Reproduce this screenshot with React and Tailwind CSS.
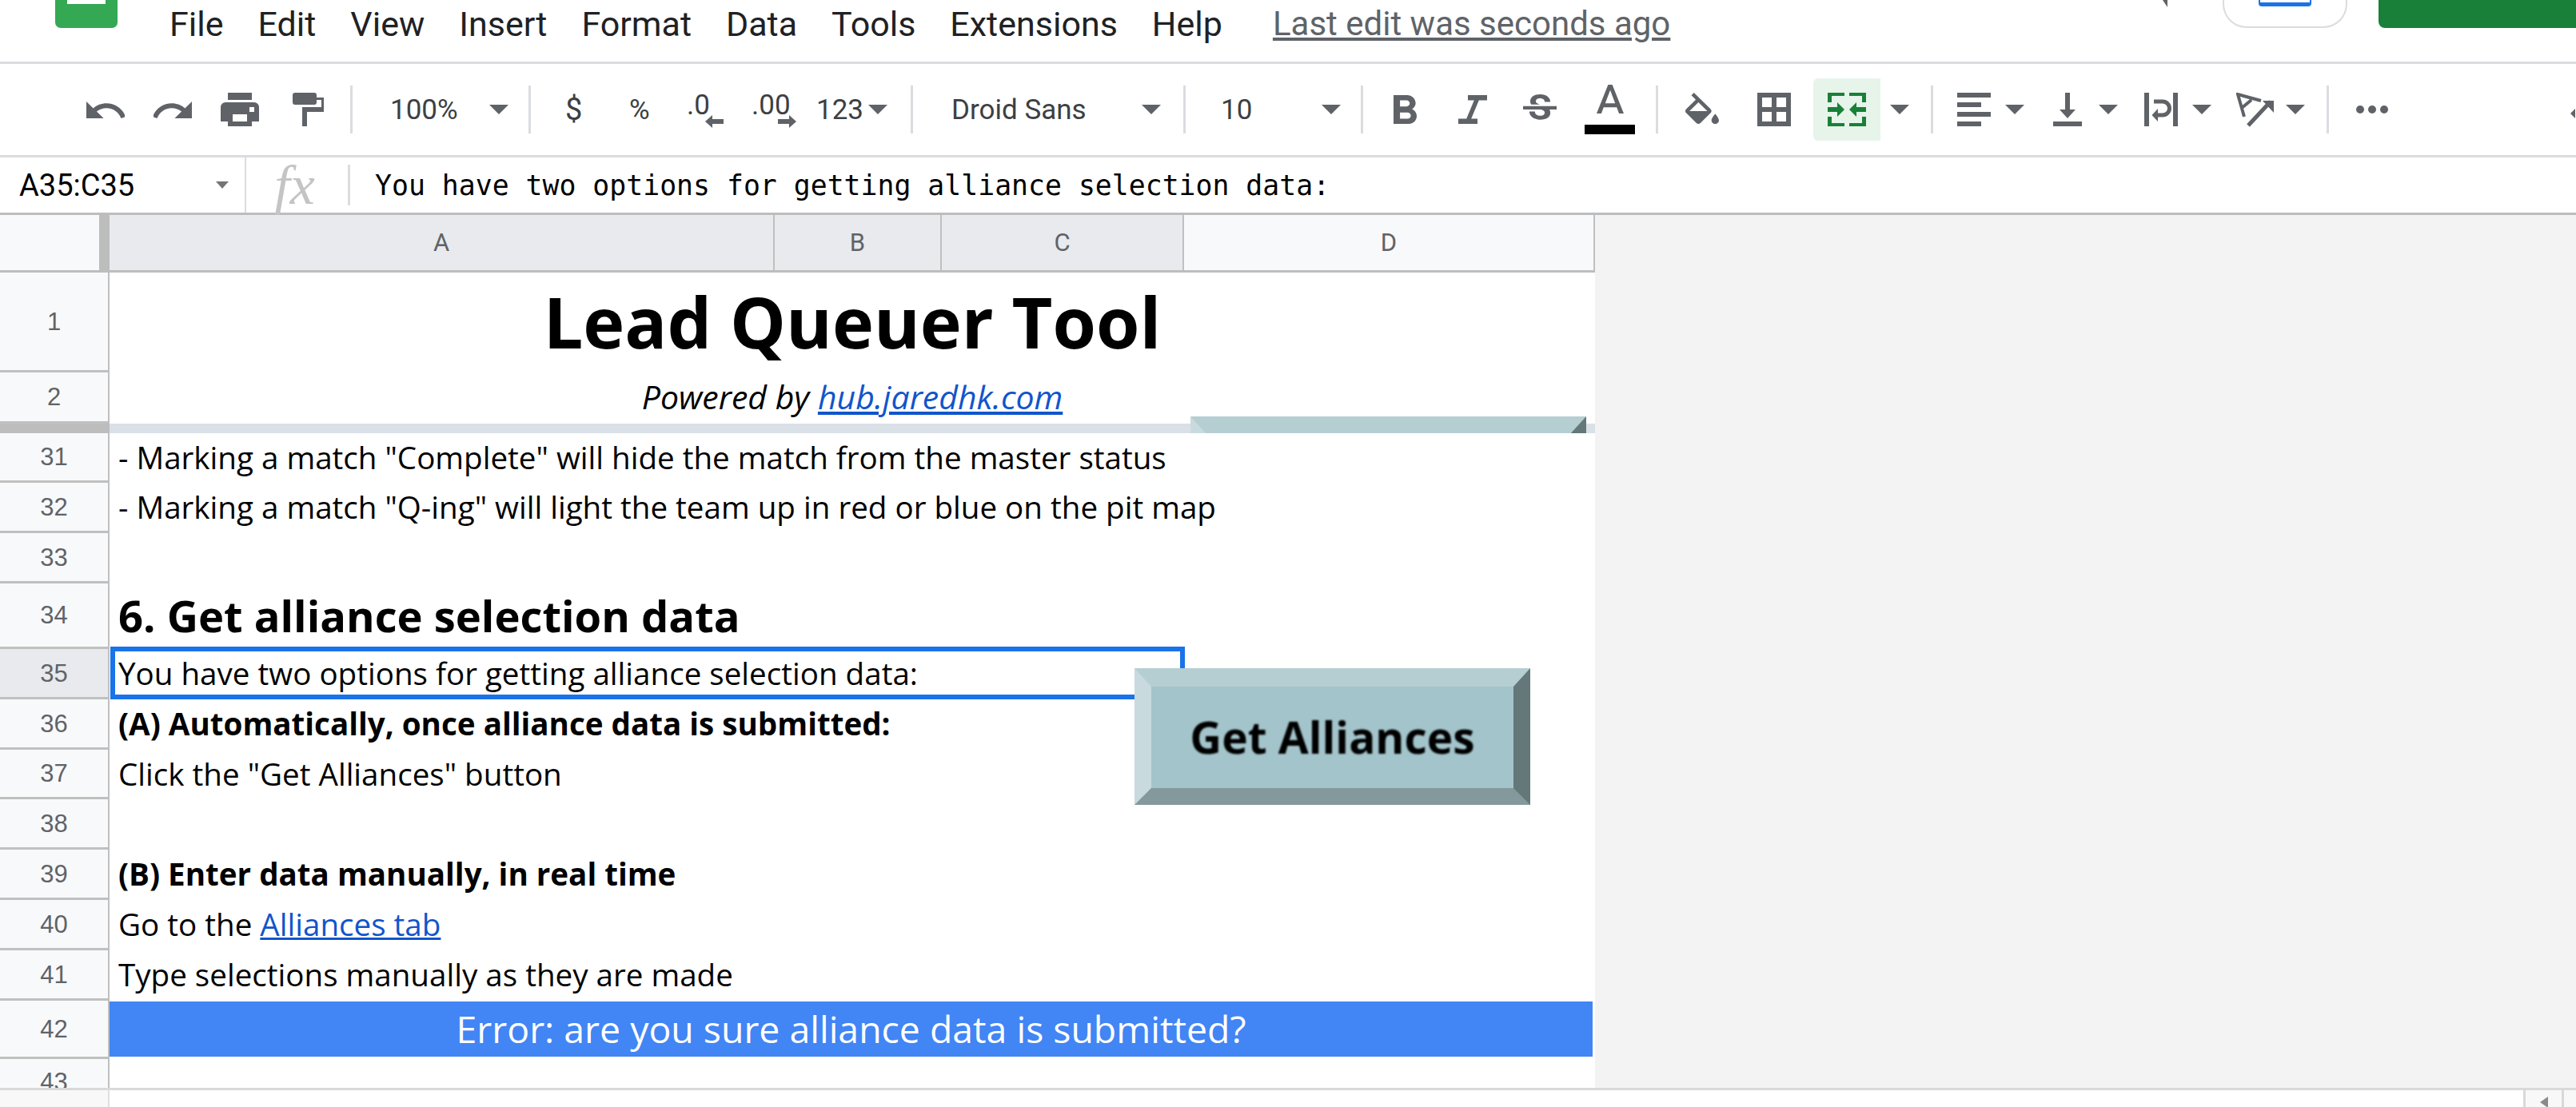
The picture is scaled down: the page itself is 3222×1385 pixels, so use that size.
const G = "#5f6368";

function Tri({ className = "" }) {
  return (
    <svg width="24" height="12" viewBox="0 0 24 12" className={"shrink-0 " + className}>
      <polygon points="0,0 24,0 12,12" fill={G} />
    </svg>
  );
}

function Sep({ className = "" }) {
  return <div className={"h-[60px] w-[3px] shrink-0 bg-[#dadce0] " + className} />;
}

function Tx({ className = "", children }) {
  return (
    <div className={"shrink-0 whitespace-nowrap font-['Roboto'] text-[35px] leading-none text-[#3c4043] " + className}>
      {children}
    </div>
  );
}

function Toolbar() {
  return (
    <div className="flex h-[117px] items-center border-b-[3px] border-[#dadce0] bg-white pl-[108px]">
      <svg width="48" height="21" viewBox="2 7 20 9" preserveAspectRatio="none" className="shrink-0">
        <path fill={G} d="M12.5 8c-2.65 0-5.05.99-6.9 2.6L2 7v9h9l-3.62-3.62c1.39-1.16 3.16-1.88 5.12-1.88 3.54 0 6.55 2.31 7.6 5.5l2.37-.78C21.08 11.03 17.15 8 12.5 8z" />
      </svg>
      <svg width="48" height="21" viewBox="2 7 20 9" preserveAspectRatio="none" className="ml-[36px] shrink-0">
        <path fill={G} d="M18.4 10.6C16.55 8.99 14.15 8 11.5 8c-4.65 0-8.58 3.03-9.96 7.22L3.9 16c1.05-3.19 4.05-5.5 7.6-5.5 1.95 0 3.73.72 5.12 1.88L13 16h9V7l-3.6 3.6z" />
      </svg>
      <svg width="48" height="42" viewBox="0 0 16 14" className="ml-[36px] shrink-0">
        <path fill={G} fillRule="evenodd" d="M3 0h10v3H3z M2 4h12a2 2 0 0 1 2 2v6h-3v2H3v-2H0V6a2 2 0 0 1 2-2z M5 9h6v3H5z M12 6h2v2h-2z" />
      </svg>
      <svg width="39" height="42" viewBox="0 0 13 14" className="ml-[42px] shrink-0">
        <path fill={G} d="M1 0h8a1 1 0 0 1 1 1v3a1 1 0 0 1-1 1H1a1 1 0 0 1-1-1V1a1 1 0 0 1 1-1z M10 2h3v6H6v6H4V6h8V3h-2z" />
      </svg>
      <Sep className="ml-[33px]" />
      <Tx className="ml-[47px] w-[84px]">100%</Tx>
      <Tri className="ml-[40px]" />
      <Sep className="ml-[25px]" />
      <Tx className="ml-[43px] w-[20px] text-[38px]">$</Tx>
      <Tx className="ml-[60px] w-[28px] text-[34px]">%</Tx>
      <div className="relative ml-[44px] h-[46px] w-[46px] shrink-0">
        <span className="font-['Roboto'] text-[35px] leading-none text-[#3c4043]">.0</span>
        <svg width="23" height="16" viewBox="0 0 23 16" className="absolute top-[30px] left-[23px]">
          <path fill={G} d="M9 0v5h14v6H9v5L0 8z" />
        </svg>
      </div>
      <div className="relative ml-[35px] h-[46px] w-[56px] shrink-0">
        <span className="font-['Roboto'] text-[35px] leading-none text-[#3c4043]">.00</span>
        <svg width="23" height="16" viewBox="0 0 23 16" className="absolute top-[30px] left-[33px]">
          <path fill={G} d="M14 0v5H0v6h14v5l9-8z" />
        </svg>
      </div>
      <Tx className="ml-[25px] w-[59px]">123</Tx>
      <Tri className="ml-[6px]" />
      <Sep className="ml-[29px]" />
      <Tx className="ml-[48px] w-[173px]">Droid Sans</Tx>
      <Tri className="ml-[65px]" />
      <Sep className="ml-[28px]" />
      <Tx className="ml-[44px] w-[41px]">10</Tx>
      <Tri className="ml-[85px]" />
      <Sep className="ml-[25px]" />
      <svg width="29" height="36" viewBox="7 4 10.75 14" preserveAspectRatio="none" className="ml-[38px] shrink-0">
        <path fill={G} d="M15.6 10.79c.97-.67 1.65-1.77 1.65-2.79 0-2.26-1.75-4-4-4H7v14h7.04c2.09 0 3.71-1.7 3.71-3.79 0-1.52-.86-2.82-2.15-3.42zM10 6.5h3c.83 0 1.5.67 1.5 1.5s-.67 1.5-1.5 1.5h-3v-3zm3.5 9H10v-3h3.5c.83 0 1.5.67 1.5 1.5s-.67 1.5-1.5 1.5z" />
      </svg>
      <svg width="36" height="36" viewBox="6 4 12 14" preserveAspectRatio="none" className="ml-[52px] shrink-0">
        <path fill={G} d="M10 4v2.5h2.6L9.4 15.5H6V18h8v-2.5h-2.6l3.2-9H18V4z" />
      </svg>
      <svg width="42" height="38" viewBox="3 3 18 18" preserveAspectRatio="none" className="ml-[45px] shrink-0">
        <path fill={G} d="M7.24 8.75c-.26-.48-.39-1.03-.39-1.67 0-.61.13-1.16.4-1.67.26-.5.63-.93 1.11-1.29.48-.35 1.05-.63 1.7-.83.66-.19 1.39-.29 2.18-.29.81 0 1.54.11 2.21.34.66.22 1.23.54 1.69.94.47.4.83.88 1.08 1.43.25.55.38 1.15.38 1.81h-3.01c0-.31-.05-.59-.15-.85-.09-.27-.24-.49-.44-.68-.2-.19-.45-.33-.75-.44-.3-.1-.66-.16-1.06-.16-.39 0-.74.04-1.03.13-.29.09-.53.21-.72.36-.19.16-.34.34-.44.55-.1.21-.15.43-.15.66 0 .48.25.88.74 1.21.38.25.77.48 1.41.7H7.39c-.05-.08-.11-.17-.15-.25zM21 12v-2H3v2h9.62c.18.07.4.14.55.2.37.17.66.34.87.51.21.17.35.36.43.57.07.2.11.43.11.69 0 .23-.05.45-.14.66-.09.2-.23.38-.42.53-.19.15-.42.26-.71.35-.29.08-.63.13-1.01.13-.43 0-.83-.04-1.18-.13s-.66-.23-.91-.42c-.25-.19-.45-.44-.59-.75-.14-.31-.25-.76-.25-1.21H6.4c0 .55.08 1.13.24 1.58.16.45.37.85.65 1.21.28.35.6.66.98.92.37.26.78.48 1.22.65.44.17.9.3 1.38.39.48.08.96.13 1.44.13.8 0 1.53-.09 2.18-.28s1.21-.45 1.67-.79c.46-.34.82-.77 1.07-1.27s.38-1.07.38-1.71c0-.6-.1-1.14-.31-1.61-.05-.11-.11-.23-.17-.33H21z" />
      </svg>
      <div className="ml-[35px] flex h-[62px] w-[63px] shrink-0 flex-col items-center justify-between">
        <svg width="34" height="36" viewBox="5.5 3 13 14" preserveAspectRatio="none">
          <path fill={G} d="M11 3L5.5 17h2.25l1.12-3h6.25l1.12 3h2.25L13 3h-2zm-1.38 9L12 5.67 14.38 12H9.62z" />
        </svg>
        <div className="h-[12px] w-[63px] bg-black" />
      </div>
      <Sep className="ml-[26px]" />
      <svg width="42" height="39" viewBox="3 0 18 17" preserveAspectRatio="none" className="ml-[34px] mb-[4px] shrink-0">
        <path fill={G} d="M16.56 8.94L7.62 0 6.21 1.41l2.38 2.38-5.15 5.15c-.59.59-.59 1.54 0 2.12l5.5 5.5c.29.29.68.44 1.06.44s.77-.15 1.06-.44l5.5-5.5c.59-.58.59-1.53 0-2.12zM5.21 10L10 5.21 14.79 10H5.21zM19 11.5s-2 2.17-2 3.5c0 1.1.9 2 2 2s2-.9 2-2c0-1.33-2-3.5-2-3.5z" />
      </svg>
      <svg width="42" height="42" viewBox="0 0 42 42" className="ml-[48px] shrink-0">
        <path fill={G} fillRule="evenodd" d="M0 0h42v42H0z M6 6h12v12H6z M24 6h12v12H24z M6 24h12v12H6z M24 24h12v12H24z" />
      </svg>
      <div className="ml-[28px] flex h-[78px] w-[84px] shrink-0 items-center justify-center rounded-l-[6px] bg-[#e6f4ea]">
        <svg width="48" height="42" viewBox="0 0 48 42">
          <path fill="#188038" d="M0 0h21v4H5v8H0z M27 0h21v12h-5V4H27z M0 30h5v8h16v4H0z M43 30h5v12H27v-4h16z M0 18h12v-6l9 9-9 9v-6H0z M48 18H36v-6l-9 9 9 9v-6h12z" />
        </svg>
      </div>
      <Tri className="ml-[12px]" />
      <Sep className="ml-[27px]" />
      <svg width="42" height="42" viewBox="0 0 42 42" className="ml-[30px] shrink-0">
        <path fill={G} d="M0 0h42v6H0z M0 12h30v6H0z M0 24h42v6H0z M0 36h30v6H0z" />
      </svg>
      <Tri className="ml-[18px]" />
      <svg width="36" height="42" viewBox="0 0 36 42" className="ml-[36px] shrink-0">
        <path fill={G} d="M15 0h6v21h7L18 32 8 21h7z M0 36h36v6H0z" />
      </svg>
      <Tri className="ml-[21px]" />
      <svg width="42" height="42" viewBox="0 0 42 42" className="ml-[33px] shrink-0">
        <path fill={G} d="M0 0h6v42H0z M36 0h6v42h-6z M9.5 28L17 20v16z" />
        <path fill="none" stroke={G} strokeWidth="5" d="M12 11h11a8 8 0 0 1 0 17h-7" />
      </svg>
      <Tri className="ml-[18px]" />
      <svg width="47" height="43" viewBox="0 0 47 43" className="ml-[31px] shrink-0">
        <path fill="none" stroke={G} strokeWidth="4" d="M31 10L2 2l8 28 M7 19L19 9" />
        <path fill="none" stroke={G} strokeWidth="5" d="M15 41L43 11" />
        <path fill={G} d="M33 10h14v15z" />
      </svg>
      <Tri className="ml-[15px]" />
      <Sep className="ml-[27px]" />
      <svg width="40" height="10" viewBox="0 0 40 10" className="ml-[34px] shrink-0">
        <circle cx="5" cy="5" r="5" fill={G} />
        <circle cx="20" cy="5" r="5" fill={G} />
        <circle cx="35" cy="5" r="5" fill={G} />
      </svg>
      <svg width="12" height="12" viewBox="0 0 12 12" className="ml-[228px] mt-[10px] shrink-0">
        <path fill={G} d="M6 0L0 6l6 6z" />
      </svg>
    </div>
  );
}

function TopBar() {
  return (
    <div className="flex h-[80px] items-start border-b-[3px] border-[#dadce0] bg-white">
      <div className="ml-[69px] flex h-[35px] w-[78px] shrink-0 justify-center rounded-b-[7px] bg-[#34a853]">
        <div className="h-[5px] w-[48px] bg-white" />
      </div>
      <div className="ml-[65px] flex h-[60px] items-center gap-[43px] font-['Roboto'] text-[43px] leading-none whitespace-nowrap text-[#202124]">
        <span>File</span>
        <span>Edit</span>
        <span>View</span>
        <span>Insert</span>
        <span>Format</span>
        <span>Data</span>
        <span>Tools</span>
        <span>Extensions</span>
        <span>Help</span>
        <span className="ml-[20px] text-[42px] text-[#5f6368] underline">Last edit was seconds ago</span>
      </div>
      <div className="ml-auto flex items-start">
        <svg width="6" height="9" viewBox="0 0 6 9" className="shrink-0">
          <path fill={G} d="M0 0h6v9z" />
        </svg>
        <div className="ml-[69px] flex h-[35px] w-[156px] justify-center rounded-b-[30px] border-[2px] border-t-0 border-[#dadce0]">
          <div className="h-[8px] w-[66px] rounded-b-[4px] border-[2px] border-t-0 border-[#1a73e8] bg-[#1a73e8]">
            <div className="h-[3px] bg-white" />
          </div>
        </div>
        <div className="ml-[39px] h-[35px] w-[247px] rounded-bl-[8px] bg-[#188038]" />
      </div>
    </div>
  );
}

function FormulaBar() {
  return (
    <div className="flex h-[72px] items-stretch border-b-[3px] border-[#bdbdbd] bg-white">
      <div className="flex w-[306px] shrink-0 items-center pl-[24px]">
        <span className="w-[246px] font-['Roboto'] text-[38px] leading-none text-black">A35:C35</span>
        <svg width="16" height="9" viewBox="0 0 16 9">
          <polygon points="0,0 16,0 8,9" fill="#757575" />
        </svg>
      </div>
      <div className="w-[2px] shrink-0 bg-[#dadce0]" />
      <div className="flex w-[127px] shrink-0 items-center justify-center pr-[6px] font-['Liberation_Serif'] text-[70px] leading-none text-[#c4c4c4] italic">
        fx
      </div>
      <div className="my-[9px] w-[3px] shrink-0 bg-[#dadce0]" />
      <div className="flex items-center pt-[2px] pl-[31px] font-['DejaVu_Sans_Mono'] text-[34.8px] leading-none whitespace-nowrap text-black">
        You have two options for getting alliance selection data:
      </div>
    </div>
  );
}

function ColHead({ className = "", children }) {
  return (
    <div className={"flex shrink-0 items-center justify-center font-['Roboto'] text-[31px] leading-none text-[#5f6368] " + className}>
      {children}
    </div>
  );
}

function RowHead({ active, children, className = "" }) {
  return (
    <div
      className={
        "flex w-[137px] shrink-0 items-center justify-center border-r-[2px] border-b-[3px] border-[#c0c0c0] font-['Liberation_Sans'] text-[31px] leading-none text-[#5f6368] " +
        (active ? "bg-[#e8eaed] " : "bg-[#f8f9fa] ") +
        className
      }
    >
      {children}
    </div>
  );
}

function Row({ n, h, active, className = "", children }) {
  return (
    <div className={"relative flex w-[1995px] " + h}>
      <RowHead active={active}>{n}</RowHead>
      <div className={"flex min-w-0 flex-1 items-center bg-white pb-[2px] pl-[11px] font-['Open_Sans'] leading-none whitespace-nowrap text-black " + className}>
        {children}
      </div>
    </div>
  );
}

function Bevel({ children }) {
  return (
    <div className="flex h-[171px] w-[495px] items-center justify-center border-t-[23px] border-r-[21px] border-b-[21px] border-l-[21px] border-t-[#b5ced2] border-r-[#647779] border-b-[#83999c] border-l-[#c8dade] bg-[#a3c4cb]">
      {children}
    </div>
  );
}

const Link = ({ children }) => <span className="text-[#1155cc] underline">{children}</span>;

function Grid() {
  return (
    <div className="relative h-[1092px] overflow-hidden bg-[#f3f3f3]">
      <div className="flex h-[72px] w-[1995px] border-b-[3px] border-[#bdbdbd]">
        <div className="h-full w-[124px] shrink-0 bg-[#f8f9fa]" />
        <div className="h-full w-[13px] shrink-0 bg-[#bdbdbd]" />
        <ColHead className="w-[832px] border-r-[2px] border-[#c0c0c0] bg-[#e8eaed]">A</ColHead>
        <ColHead className="w-[209px] border-r-[2px] border-[#c0c0c0] bg-[#e8eaed]">B</ColHead>
        <ColHead className="w-[303px] border-r-[2px] border-[#c0c0c0] bg-[#e8eaed]">C</ColHead>
        <ColHead className="w-[514px] border-r-[2px] border-[#c0c0c0] bg-[#f8f9fa]">D</ColHead>
      </div>

      <div className="flex h-[125px] w-[1995px]">
        <RowHead className="border-b-[2px]">1</RowHead>
        <div className="flex flex-1 items-center justify-center bg-white pb-[4px] font-['Open_Sans'] text-[88px] leading-none font-bold text-black">
          Lead Queuer Tool
        </div>
      </div>
      <div className="flex h-[64px] w-[1995px]">
        <RowHead className="border-b-0">2</RowHead>
        <div className="flex flex-1 items-center justify-center bg-white pb-[3px] font-['Open_Sans'] text-[41px] leading-none text-black italic">
          Powered by&nbsp;<Link>hub.jaredhk.com</Link>
        </div>
      </div>
      <div className="flex h-[12px] w-[1995px]">
        <div className="w-[137px] shrink-0 bg-[#bdbdbd]" />
        <div className="flex-1 bg-[#d9e0e7]" />
      </div>

      <Row n="31" h="h-[62px]" className="text-[38.6px]">- Marking a match "Complete" will hide the match from the master status</Row>
      <Row n="32" h="h-[63px]" className="text-[38.6px]">- Marking a match "Q-ing" will light the team up in red or blue on the pit map</Row>
      <Row n="33" h="h-[63px]" />
      <Row n="34" h="h-[82px]" className="text-[54.3px] font-bold">6. Get alliance selection data</Row>
      <Row n="35" h="h-[63px]" active className="text-[38.6px]">
        You have two options for getting alliance selection data:
        <div className="absolute top-[-3px] left-[138px] h-[66px] w-[1344px] border-[6px] border-[#1a73e8]" />
      </Row>
      <Row n="36" h="h-[63px]" className="text-[38.6px] font-bold">(A) Automatically, once alliance data is submitted:</Row>
      <Row n="37" h="h-[62px]" className="text-[38.6px]">Click the "Get Alliances" button</Row>
      <Row n="38" h="h-[63px]" />
      <Row n="39" h="h-[63px]" className="text-[38.6px] font-bold">(B) Enter data manually, in real time</Row>
      <Row n="40" h="h-[63px]" className="text-[38.6px]">Go to the&nbsp;<Link>Alliances tab</Link></Row>
      <Row n="41" h="h-[63px]" className="text-[38.6px]">Type selections manually as they are made</Row>
      <div className="flex h-[73px] w-[1995px]">
        <RowHead>42</RowHead>
        <div className="flex-1 bg-white pt-[1px]">
          <div className="flex h-[69px] w-[1855px] items-center justify-center bg-[#4285f4] font-['Open_Sans'] text-[46.4px] leading-none text-white">
            Error: are you sure alliance data is submitted?
          </div>
        </div>
      </div>
      <div className="relative flex h-[63px] w-[1995px]">
        <RowHead className="pb-[4px]">43</RowHead>
        <div className="flex-1 bg-white" />
      </div>

      {/* Floating button drawing, visible part in the frozen area */}
      <div className="absolute top-[252px] left-[1489px] h-[21px] w-[495px] overflow-hidden">
        <Bevel />
      </div>
      {/* Floating button drawing over the cells */}
      <div className="absolute top-[567px] left-[1419px]">
        <Bevel>
          <span className="pb-[3px] font-['Open_Sans'] text-[55px] leading-none font-bold text-black blur-[1px]">Get Alliances</span>
        </Bevel>
      </div>
    </div>
  );
}

function BottomBar() {
  return (
    <div className="flex h-[24px] border-t-[3px] border-[#d9d9d9] bg-white">
      <div className="w-[137px] shrink-0 border-r-[2px] border-[#e0e0e0] bg-[#f8f8f8]" />
      <div className="flex-1" />
      <div className="flex w-[51px] shrink-0 justify-center border-x-[3px] border-[#d9d9d9] bg-[#f8f8f8] pt-[8px]">
        <svg width="10" height="14" viewBox="0 0 10 14" className="shrink-0">
          <path fill="#8a8a8a" d="M10 0v14L0 7z" />
        </svg>
      </div>
      <div className="w-[15px] shrink-0 bg-[#f8f8f8]" />
    </div>
  );
}

export default function App() {
  return (
    <div className="flex h-[1385px] w-[3222px] flex-col overflow-hidden bg-white">
      <TopBar />
      <Toolbar />
      <FormulaBar />
      <Grid />
      <BottomBar />
    </div>
  );
}
